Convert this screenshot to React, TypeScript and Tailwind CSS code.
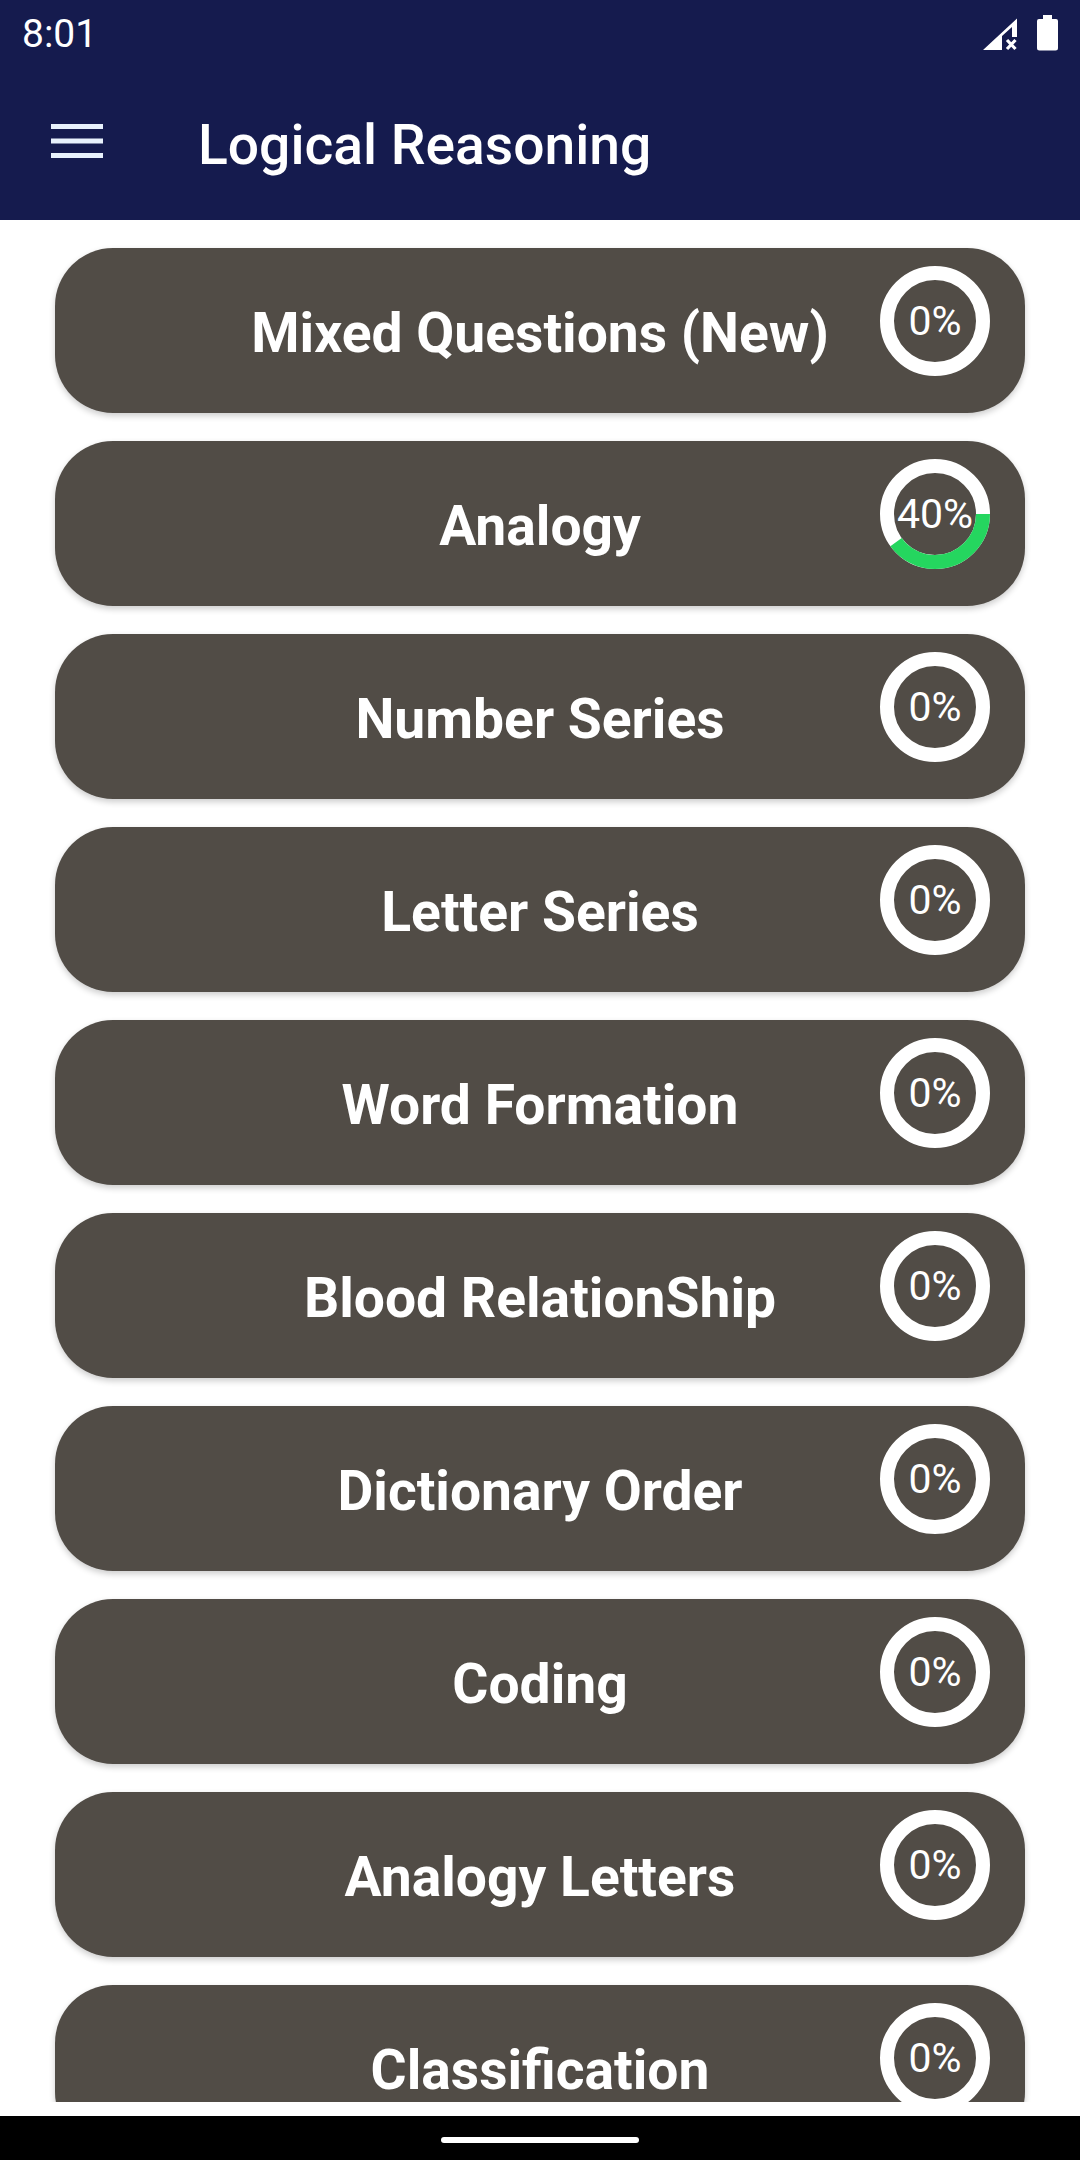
import React from 'react';

const topics = [
  { name: 'Mixed Questions (New)', progress: 0 },
  { name: 'Analogy', progress: 40 },
  { name: 'Number Series', progress: 0 },
  { name: 'Letter Series', progress: 0 },
  { name: 'Word Formation', progress: 0 },
  { name: 'Blood RelationShip', progress: 0 },
  { name: 'Dictionary Order', progress: 0 },
  { name: 'Coding', progress: 0 },
  { name: 'Analogy Letters', progress: 0 },
  { name: 'Classification', progress: 0 },
];

const ProgressRing: React.FC<{ progress: number }> = ({ progress }) => {
  const radius = 48;
  const circumference = 2 * Math.PI * radius;
  return (
    <div className="absolute right-[35px] top-[18px] flex h-[110px] w-[110px] items-center justify-center">
      <svg className="absolute inset-0" width="110" height="110" viewBox="0 0 110 110">
        <circle cx="55" cy="55" r={radius} fill="none" stroke="#ffffff" strokeWidth="14" />
        {progress > 0 && (
          <circle
            cx="55"
            cy="55"
            r={radius}
            fill="none"
            stroke="#25d65f"
            strokeWidth="14"
            strokeDasharray={`${(circumference * progress) / 100} ${circumference}`}
          />
        )}
      </svg>
      <span className="relative text-[41px] leading-none font-normal text-white">{progress}%</span>
    </div>
  );
};

const TopicCard: React.FC<{ name: string; progress: number }> = ({ name, progress }) => (
  <div className="relative flex h-[165px] w-[970px] shrink-0 items-center justify-center rounded-[58px] bg-[#514c46] shadow-[0_3px_6px_rgba(0,0,0,0.2)]">
    <span className="mt-[6px] text-[55.2px] leading-none font-bold text-white">{name}</span>
    <ProgressRing progress={progress} />
  </div>
);

export default function App() {
  return (
    <div className="flex h-[2160px] w-[1080px] flex-col overflow-hidden bg-white font-['Roboto',sans-serif]">
      <header className="h-[220px] shrink-0 bg-[#151b4e] text-white">
        <div className="flex h-[66px] items-center justify-between pr-[22px] pl-[22px]">
          <span className="mt-[2px] text-[39px] leading-none">8:01</span>
          <div className="flex items-center gap-[18px]">
            <svg width="36" height="36" viewBox="0 0 36 36">
              <path d="M0 35 L34 3.5 V22 H29 V12 L19 21 V35 Z" fill="#ffffff" />
              <path d="M24 25 L32.5 34 M32.5 25 L24 34" stroke="#ffffff" strokeWidth="3.2" fill="none" />
            </svg>
            <svg width="21" height="36" viewBox="0 0 21 36">
              <path d="M6 0 H15 V4 H19 A2 2 0 0 1 21 6 V33 A2.5 2.5 0 0 1 18.5 35.5 H2.5 A2.5 2.5 0 0 1 0 33 V6 A2 2 0 0 1 2 4 H6 Z" fill="#ffffff" />
            </svg>
          </div>
        </div>
        <div className="flex h-[154px] items-center pl-[51px]">
          <svg className="mt-[-4px]" width="52" height="34" viewBox="0 0 52 34">
            <path d="M0 0 H52 V5 H0 Z M0 14.5 H52 V19.5 H0 Z M0 29 H52 V34 H0 Z" fill="#e8f1fc" />
          </svg>
          <h1 className="ml-[95px] mt-[6px] text-[55.2px] leading-none font-medium text-white">Logical Reasoning</h1>
        </div>
      </header>

      <main className="flex h-[1882px] shrink-0 flex-col items-center gap-[28px] overflow-hidden pt-[28px]">
        {topics.map((topic) => (
          <TopicCard key={topic.name} name={topic.name} progress={topic.progress} />
        ))}
      </main>

      <div className="h-[14px] shrink-0 bg-white" />

      <nav className="flex h-[44px] shrink-0 items-start justify-center bg-black pt-[21px]">
        <div className="h-[6px] w-[198px] rounded-full bg-white" />
      </nav>
    </div>
  );
}
